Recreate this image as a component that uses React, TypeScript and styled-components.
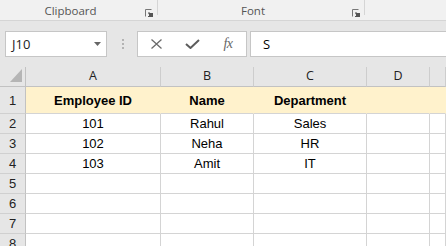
import styled, { createGlobalStyle } from "styled-components";
import React from "react";

const GlobalStyle = createGlobalStyle`
  html, body {
    margin: 0;
    padding: 0;
    overflow: hidden;
    background: #e6e6e6;
  }
`;

const COLS = "26px 135px 93px 113px 63px 1fr";

const Page = styled.div`
  width: 446px;
  height: 246px;
  overflow: hidden;
  background: #e6e6e6;
  font-family: "Open Sans", "Noto Sans", sans-serif;
`;

const Ribbon = styled.div`
  display: flex;
  height: 20px;
  background: #f1f1f1;
  border-bottom: 1px solid #d5d5d5;
`;

const Group = styled.div<{ $width?: number }>`
  display: flex;
  flex: ${(p) => (p.$width ? `0 0 ${p.$width}px` : "1")};
`;

const GroupLabel = styled.div`
  flex: 1;
  text-align: center;
  padding-top: 3px;
  font-size: 11.5px;
  line-height: 16px;
  color: #555;
`;

const Launcher = styled.div`
  width: 16px;
  display: flex;
  justify-content: center;
  padding-top: 9px;
  box-sizing: border-box;
`;

const Separator = styled.div`
  width: 1px;
  height: 15px;
  background: #d5d5d5;
`;

const FormulaRow = styled.div`
  display: flex;
  align-items: center;
  padding: 10px 0 10px 5px;
`;

const Box = styled.div<{ $width?: number }>`
  box-sizing: border-box;
  height: 26px;
  background: #fff;
  border: 1px solid #c6c6c6;
  display: flex;
  align-items: center;
  ${(p) => (p.$width ? `flex: 0 0 ${p.$width}px;` : "flex: 1; border-right: none;")}
`;

const NameBox = styled(Box)`
  justify-content: space-between;
  padding: 0 5px 0 6px;
  font-size: 13px;
  color: #222;
`;

const Dots = styled.div`
  display: flex;
  flex-direction: column;
  gap: 2px;
  margin: 0 13px 0 15px;

  span {
    width: 2px;
    height: 2px;
    background: #b3b3b3;
  }
`;

const FuncSlot = styled.div`
  width: 36px;
  height: 100%;
  display: flex;
  align-items: center;
  justify-content: center;
`;

const Fx = styled.span`
  font-family: "Liberation Serif", serif;
  font-style: italic;
  font-size: 14px;
  color: #666;
  letter-spacing: -0.5px;
`;

const FormulaInput = styled(Box)`
  margin-left: 3px;
  padding-left: 12px;
  font-size: 13px;
  color: #000;
`;

const Sheet = styled.div`
  display: flex;
  flex-direction: column;
`;

const Row = styled.div<{ $height: number }>`
  display: grid;
  grid-template-columns: ${COLS};
  height: ${(p) => p.$height}px;
`;

const ColHead = styled.div`
  box-sizing: border-box;
  display: flex;
  align-items: center;
  justify-content: center;
  padding-bottom: 2px;
  background: #e6e6e6;
  border-right: 1px solid #cdcdcd;
  border-bottom: 1px solid #c2c2c2;
  font-size: 12.5px;
  line-height: 17px;
  color: #222;
`;

const Corner = styled(ColHead)`
  padding: 0;
  border-right-color: #c2c2c2;
`;

const RowHead = styled.div<{ $align?: string }>`
  box-sizing: border-box;
  display: flex;
  justify-content: center;
  align-items: ${(p) => p.$align || "flex-end"};
  background: #e6e6e6;
  border-right: 1px solid #c2c2c2;
  border-bottom: 1px solid #d0d0d0;
  font-family: "Liberation Sans", Arial, sans-serif;
  font-size: 13px;
  line-height: 19px;
  color: #222;
`;

const Cell = styled.div<{ $fill?: string; $bold?: boolean; $align?: string }>`
  box-sizing: border-box;
  display: flex;
  justify-content: center;
  align-items: ${(p) => p.$align || "flex-end"};
  background: ${(p) => p.$fill || "#fff"};
  border-right: 1px solid ${(p) => p.$fill || "#d4d4d4"};
  border-bottom: 1px solid #d4d4d4;
  font-family: "Liberation Sans", Arial, sans-serif;
  font-size: 13px;
  line-height: 19px;
  font-weight: ${(p) => (p.$bold ? 700 : 400)};
  color: #000;
  white-space: nowrap;
`;

const columns = ["A", "B", "C", "D", ""];

const rows: { n: number; cells: string[]; head?: boolean }[] = [
  { n: 1, cells: ["Employee ID", "Name", "Department", "", ""], head: true },
  { n: 2, cells: ["101", "Rahul", "Sales", "", ""] },
  { n: 3, cells: ["102", "Neha", "HR", "", ""] },
  { n: 4, cells: ["103", "Amit", "IT", "", ""] },
  { n: 5, cells: ["", "", "", "", ""] },
  { n: 6, cells: ["", "", "", "", ""] },
  { n: 7, cells: ["", "", "", "", ""] },
  { n: 8, cells: ["", "", "", "", ""] },
];

const LauncherIcon = () => (
  <svg width="8" height="8" viewBox="0 0 8 8">
    <path d="M0.5 7.5V0.5H6.5" fill="none" stroke="#777" strokeWidth="1" />
    <path d="M3 4L4 3L8 7V8H3V7L5 7Z" fill="#555" />
    <rect x="4" y="4" width="4" height="4" fill="#555" />
  </svg>
);

const App: React.FC = () => {
  return (
    <>
      <GlobalStyle />
      <Page>
        <Ribbon>
          <Group $width={158}>
            <GroupLabel>Clipboard</GroupLabel>
            <Launcher><LauncherIcon /></Launcher>
            <Separator />
          </Group>
          <Group $width={207}>
            <GroupLabel>Font</GroupLabel>
            <Launcher><LauncherIcon /></Launcher>
            <Separator />
          </Group>
          <Group />
        </Ribbon>

        <FormulaRow>
          <NameBox $width={102}>
            <span>J10</span>
            <svg width="7" height="4" viewBox="0 0 7 4">
              <polygon points="0,0 7,0 3.5,4" fill="#666" />
            </svg>
          </NameBox>
          <Dots>
            <span />
            <span />
            <span />
          </Dots>
          <Box $width={110}>
            <FuncSlot>
              <svg width="11" height="10" viewBox="0 0 11 10">
                <path d="M0.5 0.5L10.5 9.5M10.5 0.5L0.5 9.5" stroke="#6b6b6b" strokeWidth="1.3" />
              </svg>
            </FuncSlot>
            <FuncSlot>
              <svg width="15" height="10" viewBox="0 0 15 10">
                <path d="M1 5L5.5 9L14 1" fill="none" stroke="#5c5c5c" strokeWidth="2" />
              </svg>
            </FuncSlot>
            <FuncSlot>
              <Fx>fx</Fx>
            </FuncSlot>
          </Box>
          <FormulaInput>S</FormulaInput>
        </FormulaRow>

        <Sheet>
          <Row $height={20}>
            <Corner>
              <svg width="25" height="19" viewBox="0 0 25 19">
                <polygon points="10,15 22,2 22,15" fill="#b5b5b5" />
              </svg>
            </Corner>
            {columns.map((c, i) => (
              <ColHead key={i}>{c}</ColHead>
            ))}
          </Row>
          {rows.map((r) => (
            <Row key={r.n} $height={r.head ? 27 : 20}>
              <RowHead $align={r.head ? "center" : undefined}>{r.n}</RowHead>
              {r.cells.map((v, i) => (
                <Cell
                  key={i}
                  $bold={r.head}
                  $fill={r.head ? "#fff2cc" : undefined}
                  $align={r.head ? "center" : undefined}
                >
                  {v}
                </Cell>
              ))}
            </Row>
          ))}
        </Sheet>
      </Page>
    </>
  );
};

export default App;
